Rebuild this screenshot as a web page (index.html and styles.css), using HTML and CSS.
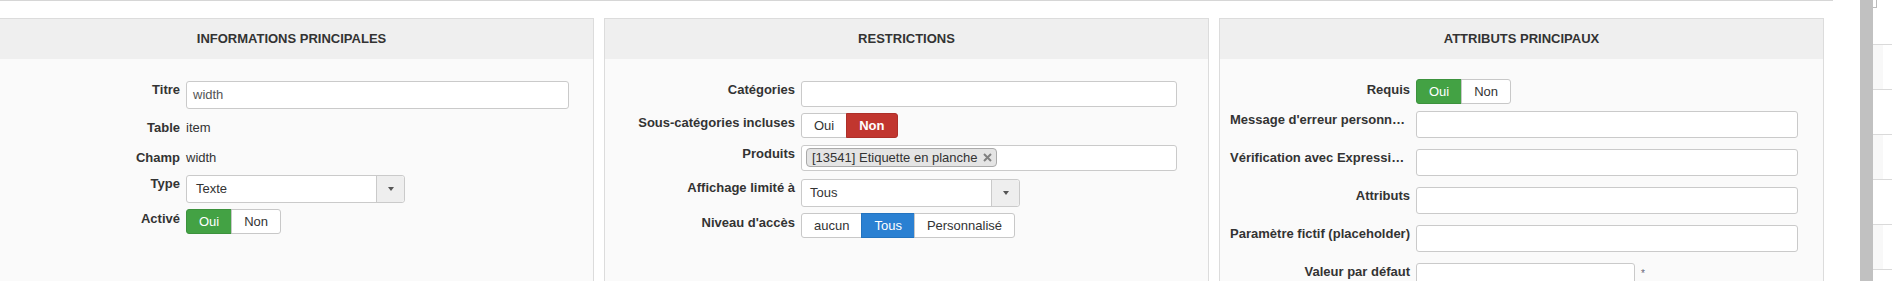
FILE: index.html
```html
<!DOCTYPE html>
<html lang="fr">
<head>
<meta charset="utf-8">
<title>Champ</title>
<link rel="stylesheet" href="styles.css">
</head>
<body>
<div class="layout">
  <main class="main">
    <div class="topline"></div>
    <div class="panels">
      <section class="panel">
        <header class="panel-head">INFORMATIONS PRINCIPALES</header>
        <div class="panel-body pr-24">
          <div class="row">
            <label class="label">Titre</label>
            <div class="field"><div class="input">width</div></div>
          </div>
          <div class="row row-static">
            <span class="label">Table</span>
            <span class="value">item</span>
          </div>
          <div class="row row-static">
            <span class="label">Champ</span>
            <span class="value">width</span>
          </div>
          <div class="row">
            <label class="label">Type</label>
            <div class="field">
              <div class="select"><span class="select-value">Texte</span><span class="select-btn"><i class="caret"></i></span></div>
            </div>
          </div>
          <div class="row row-toggle">
            <label class="label">Activé</label>
            <div class="toggle"><span class="tbtn on-green">Oui</span><span class="tbtn">Non</span></div>
          </div>
        </div>
      </section>

      <section class="panel">
        <header class="panel-head">RESTRICTIONS</header>
        <div class="panel-body pr-31">
          <div class="row">
            <label class="label">Catégories</label>
            <div class="field"><div class="input multi"></div></div>
          </div>
          <div class="row row-toggle">
            <label class="label">Sous-catégories incluses</label>
            <div class="toggle"><span class="tbtn">Oui</span><span class="tbtn on-red">Non</span></div>
          </div>
          <div class="row row-multi">
            <label class="label">Produits</label>
            <div class="field">
              <div class="input multi chips">
                <span class="chip">[13541] Etiquette en planche<svg class="chip-x" width="9" height="9" viewBox="0 0 9 9"><path d="M1 1L8 8M8 1L1 8" stroke="#808080" stroke-width="2"/></svg></span>
              </div>
            </div>
          </div>
          <div class="row">
            <label class="label">Affichage limité à</label>
            <div class="field">
              <div class="select"><span class="select-value tight">Tous</span><span class="select-btn"><i class="caret"></i></span></div>
            </div>
          </div>
          <div class="row row-toggle">
            <label class="label">Niveau d'accès</label>
            <div class="toggle"><span class="tbtn">aucun</span><span class="tbtn on-blue">Tous</span><span class="tbtn">Personnalisé</span></div>
          </div>
        </div>
      </section>

      <section class="panel">
        <header class="panel-head">ATTRIBUTS PRINCIPAUX</header>
        <div class="panel-body loose pr-25">
          <div class="row row-toggle row-first">
            <label class="label">Requis</label>
            <div class="toggle"><span class="tbtn on-green">Oui</span><span class="tbtn">Non</span></div>
          </div>
          <div class="row">
            <label class="label label-left" title="Message d'erreur personnalisé">Message d'erreur personn…</label>
            <div class="field"><div class="input"></div></div>
          </div>
          <div class="row">
            <label class="label label-left" title="Vérification avec Expression régulière">Vérification avec Expressi…</label>
            <div class="field"><div class="input"></div></div>
          </div>
          <div class="row">
            <label class="label">Attributs</label>
            <div class="field"><div class="input"></div></div>
          </div>
          <div class="row">
            <label class="label">Paramètre fictif (placeholder)</label>
            <div class="field"><div class="input"></div></div>
          </div>
          <div class="row">
            <label class="label">Valeur par défaut</label>
            <div class="field field-inline"><div class="input input-short"></div><span class="req">*</span></div>
          </div>
        </div>
      </section>
    </div>
  </main>
  <div class="scrollbar"></div>
  <aside class="side">
    <div class="side-top"><span class="side-mark"></span></div>
    <div class="side-row alt"></div>
    <div class="side-row"></div>
    <div class="side-row alt"></div>
    <div class="side-row"></div>
    <div class="side-row alt"></div>
    <div class="side-row"></div>
  </aside>
</div>
</body>
</html>
```

FILE: styles.css
```css
html, body {
  margin: 0;
  padding: 0;
  background: #fff;
}

body {
  font-family: "Liberation Sans", Arial, sans-serif;
  font-size: 13px;
  color: #333;
}

.layout {
  display: flex;
  height: 281px;
  overflow: hidden;
}

.main {
  width: 1860px;
  flex: none;
  overflow: hidden;
}

.topline {
  width: 1833px;
  height: 1px;
  background: #d6d6d6;
}

.panels {
  display: flex;
  gap: 10px;
  margin-top: 17px;
  margin-left: -11px;
}

.panel {
  width: 605px;
  flex: none;
  box-sizing: border-box;
  border: 1px solid #dcdcdc;
  background: #fafafa;
}

.panel-head {
  height: 40px;
  line-height: 40px;
  background: #efefef;
  text-align: center;
  font-weight: bold;
  font-size: 13px;
  color: #333;
}

.panel-body {
  padding: 22px 24px 40px 10px;
  min-height: 240px;
}

.pr-24 { padding-right: 24px; }
.pr-25 { padding-right: 25px; }
.pr-31 { padding-right: 31px; }

.panel-body.loose {
  padding-top: 20px;
}

.row {
  display: flex;
  align-items: flex-start;
  margin-bottom: 6px;
}

.loose .row {
  margin-bottom: 11px;
}

.loose .row.row-first {
  margin-bottom: 6px;
}

.label {
  width: 180px;
  flex: none;
  margin-right: 6px;
  text-align: right;
  font-weight: bold;
  line-height: 18px;
  white-space: nowrap;
  color: #333;
}

.label-left {
  text-align: left;
}

.row-toggle {
  min-height: 26px;
}

.row-toggle .label {
  padding-top: 1px;
}

.row-first .label {
  padding-top: 2px;
}

.row-multi {
  min-height: 28px;
}

.row-static {
  padding: 4px 0 2px;
  line-height: 18px;
}

.value {
  color: #333;
}

.field {
  flex: 1;
  min-width: 0;
}

.field-inline {
  display: flex;
  align-items: flex-start;
}

.input {
  box-sizing: border-box;
  height: 28px;
  border: 1px solid #cacaca;
  border-radius: 3px;
  background: #fff;
  padding: 0 6px;
  line-height: 26px;
  color: #555;
}

.loose .input {
  height: 27px;
}

.input.multi {
  height: 26px;
}

.input-short {
  width: 219px;
}

.req {
  margin-left: 6px;
  margin-top: 5px;
  font-size: 10px;
  color: #667;
}

.chips {
  padding: 2px 4px;
  display: flex;
  align-items: flex-start;
}

.chip {
  display: inline-flex;
  align-items: center;
  box-sizing: border-box;
  height: 19px;
  padding: 0 4px 0 5px;
  border: 1px solid #aaa;
  border-radius: 4px;
  background: #e4e4e4;
  color: #333;
  line-height: 17px;
}

.chip-x {
  margin-left: 5px;
}

.select {
  box-sizing: border-box;
  display: flex;
  width: 219px;
  height: 28px;
  border: 1px solid #cacaca;
  border-radius: 3px;
  background: #fff;
}

.select-value {
  flex: 1;
  padding-left: 9px;
  line-height: 26px;
  color: #333;
}

.select-value.tight {
  padding-left: 8px;
}

.select-btn {
  width: 27px;
  border-left: 1px solid #cacaca;
  background: #eee;
  border-radius: 0 3px 3px 0;
  display: flex;
  align-items: center;
  justify-content: center;
}

.caret {
  width: 0;
  height: 0;
  border-left: 3.5px solid transparent;
  border-right: 3.5px solid transparent;
  border-top: 4px solid #555;
}

.toggle {
  display: flex;
}

.tbtn {
  box-sizing: border-box;
  height: 25px;
  line-height: 23px;
  padding: 0 12px;
  border: 1px solid #c8c8c8;
  background: #fff;
  color: #333;
}

.tbtn + .tbtn {
  margin-left: -1px;
}

.tbtn:first-child {
  border-radius: 3px 0 0 3px;
}

.tbtn:last-child {
  border-radius: 0 3px 3px 0;
}

.on-green {
  background: #43a244;
  border-color: #3c923d;
  color: #fff;
}

.on-red {
  background: #c1362f;
  border-color: #ad2f29;
  color: #fff;
  font-weight: bold;
}

.on-blue {
  background: #2a80d2;
  border-color: #2373bf;
  color: #fff;
}

.scrollbar {
  width: 13px;
  flex: none;
  background: #c1c1c1;
}

.side {
  width: 19px;
  flex: none;
  background: #fff;
}

.side-top {
  height: 44px;
}

.side-mark {
  display: block;
  width: 3px;
  height: 7px;
  border-right: 1px solid #bbb;
  border-bottom: 1px solid #bbb;
}

.side-row {
  box-sizing: border-box;
  height: 45px;
  border-top: 1px solid #dadada;
}

.side-row.alt {
  background: linear-gradient(to right, #f8f8f8 10px, #fff 10px);
}
```
